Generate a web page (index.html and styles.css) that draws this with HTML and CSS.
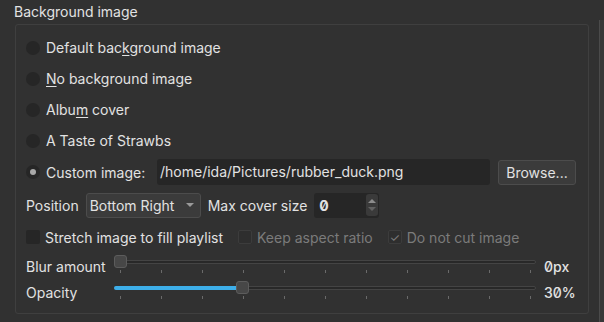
FILE: index.html
```html
<!DOCTYPE html>
<html lang="en">
<head>
    <meta charset="UTF-8">
    <title>Background image</title>
    <link rel="stylesheet" href="styles.css">
</head>
<body>

<div class="window">
    <div class="page">
        <div class="group-title">Background image</div>
        <div class="group">

            <label class="row radio-row">
                <span class="radio"></span>
                <span>Default bac<u>k</u>ground image</span>
            </label>
            <label class="row radio-row">
                <span class="radio"></span>
                <span><u>N</u>o background image</span>
            </label>
            <label class="row radio-row">
                <span class="radio"></span>
                <span>Albu<u>m</u> cover</span>
            </label>
            <label class="row radio-row">
                <span class="radio"></span>
                <span>A Taste of Strawbs</span>
            </label>

            <div class="row custom-row">
                <span class="radio checked"></span>
                <span class="custom-label">Custom image:</span>
                <div class="text-field">/home/ida/Pictures/rubber_duck.png</div>
                <button class="button">Browse...</button>
            </div>

            <div class="row position-row">
                <span>Position</span>
                <div class="combo">
                    <span>Bottom Right</span>
                    <span class="combo-arrow"></span>
                </div>
                <span>Max cover size</span>
                <div class="spin">
                    <span class="num">0</span>
                    <div class="spin-buttons">
                        <span class="spin-up"></span>
                        <span class="spin-down"></span>
                    </div>
                </div>
            </div>

            <div class="row check-row">
                <span class="check"></span>
                <span class="check-label">Stretch image to fill playlist</span>
                <span class="check disabled"></span>
                <span class="check-label disabled-text">Keep aspect ratio</span>
                <span class="check disabled checked">&#10003;</span>
                <span class="disabled-text">Do not cut image</span>
            </div>

            <div class="row slider-row">
                <span class="slider-label">Blur amount</span>
                <div class="slider">
                    <div class="groove">
                        <div class="fill" style="width: 0"></div>
                        <div class="handle" style="left: 0"></div>
                    </div>
                    <div class="ticks">
                        <i></i><i></i><i></i><i></i><i></i><i></i><i></i><i></i><i></i><i></i><i></i>
                    </div>
                </div>
                <span class="value num">0px</span>
            </div>

            <div class="row slider-row">
                <span class="slider-label">Opacity</span>
                <div class="slider">
                    <div class="groove">
                        <div class="fill" style="width: calc((100% - 13px) * 0.3 + 6px)"></div>
                        <div class="handle" style="left: calc((100% - 13px) * 0.3)"></div>
                    </div>
                    <div class="ticks">
                        <i></i><i></i><i></i><i></i><i></i><i></i><i></i><i></i><i></i><i></i><i></i>
                    </div>
                </div>
                <span class="value num">30%</span>
            </div>

        </div>
    </div>
    <div class="scrollbar"></div>
</div>

</body>
</html>
```

FILE: styles.css
```css
:root {
    --bg: #313131;
    --field-bg: #262626;
    --button-bg: #3b3b3b;
    --button-border: #4c4c4c;
    --frame: #3f3f3f;
    --text: #e2e2e2;
    --text-disabled: #7b7b7b;
    --accent: #3daee9;
}

* {
    margin: 0;
    padding: 0;
    box-sizing: border-box;
}

body {
    background: var(--bg);
    color: var(--text);
    font-family: Inter, "Noto Sans", sans-serif;
    font-size: 14px;
    width: 604px;
    height: 322px;
    overflow: hidden;
}

.window {
    display: flex;
    height: 322px;
}

.page {
    flex: 1;
    padding: 3px 10px 0 14px;
}

.group-title {
    height: 21px;
    line-height: 18px;
}

.group {
    margin-left: 1px;
    width: 574px;
    height: 290px;
    border: 1px solid var(--frame);
    border-radius: 3px;
    padding: 7px 10px 0 10px;
}

.scrollbar {
    width: 5px;
    margin-top: 20px;
    border-left: 1px solid #4b4b4b;
    background: #383838;
}

.row {
    display: flex;
    align-items: center;
}

.radio-row {
    height: 31px;
    gap: 6px;
}

u {
    text-underline-offset: 2px;
}

.radio {
    width: 14px;
    height: 14px;
    border-radius: 50%;
    background: var(--field-bg);
    flex: none;
    display: flex;
    align-items: center;
    justify-content: center;
}

.radio.checked::after {
    content: "";
    width: 6px;
    height: 6px;
    border-radius: 50%;
    background: #a8a8a8;
}

.custom-row {
    height: 32px;
    gap: 6px;
}

.custom-label {
    width: 105px;
}

.text-field {
    width: 333px;
    height: 26px;
    background: var(--field-bg);
    border-radius: 3px;
    padding: 0 3px;
    line-height: 26px;
}

.button {
    margin-left: 2px;
    width: 78px;
    height: 25px;
    background: var(--button-bg);
    border: 1px solid var(--button-border);
    border-radius: 3px;
    color: var(--text);
    font: inherit;
}

.position-row {
    height: 34px;
    gap: 7px;
}

.combo {
    width: 115px;
    height: 25px;
    background: var(--button-bg);
    border: 1px solid var(--button-border);
    border-radius: 3px;
    padding: 0 6px 0 3px;
    display: flex;
    align-items: center;
    justify-content: space-between;
}

.combo-arrow {
    width: 0;
    height: 0;
    border-left: 4px solid transparent;
    border-right: 4px solid transparent;
    border-top: 4px solid #9a9a9a;
}

.spin {
    width: 65px;
    height: 25px;
    background: var(--field-bg);
    border-radius: 3px;
    display: flex;
    align-items: center;
    justify-content: space-between;
    padding: 0 1px 0 5px;
    font-weight: 700;
}

.num {
    font-feature-settings: "zero";
}

.spin-buttons {
    width: 12px;
    height: 22px;
    background: #3a3a3a;
    border-radius: 3px;
    display: flex;
    flex-direction: column;
    align-items: center;
    justify-content: space-evenly;
}

.spin-up, .spin-down {
    width: 0;
    height: 0;
    border-left: 4px solid transparent;
    border-right: 4px solid transparent;
}

.spin-up {
    border-bottom: 4px solid #8c8c8c;
}

.spin-down {
    border-top: 4px solid #626262;
}

.check-row {
    height: 30px;
}

.check {
    width: 14px;
    height: 14px;
    border-radius: 2px;
    background: var(--field-bg);
    flex: none;
    margin-right: 5px;
    font-size: 12px;
    line-height: 13px;
    text-align: center;
    color: var(--text-disabled);
}

.check.disabled {
    background: #2e2e2e;
    border: 1px solid #3c3c3c;
}

.check-label {
    margin-right: 15px;
}

.disabled-text {
    color: var(--text-disabled);
}

.slider-row {
    height: 26px;
}

.slider-label {
    width: 87px;
    flex: none;
    padding-top: 3px;
}

.slider {
    width: 424px;
    padding-top: 3px;
}

.groove {
    position: relative;
    height: 4px;
    margin: 0 1px;
    background: #282828;
    border: 1px solid #444;
    border-radius: 2px;
}

.fill {
    background: var(--accent);
    margin: -1px 0 0 -1px;
    height: 4px;
    border-radius: 2px;
}

.handle {
    position: absolute;
    top: -6px;
    width: 13px;
    height: 13px;
    margin-left: -1px;
    background: #474747;
    border: 1px solid #5c5c5c;
    border-radius: 3px;
}

.ticks {
    display: flex;
    justify-content: space-between;
    padding: 0 6px 0 7px;
    margin-top: 6px;
}

.ticks i {
    width: 1px;
    height: 3px;
    background: #6a6a6a;
}

.value {
    margin-left: 7px;
    padding-top: 3px;
    font-weight: 500;
}
```
